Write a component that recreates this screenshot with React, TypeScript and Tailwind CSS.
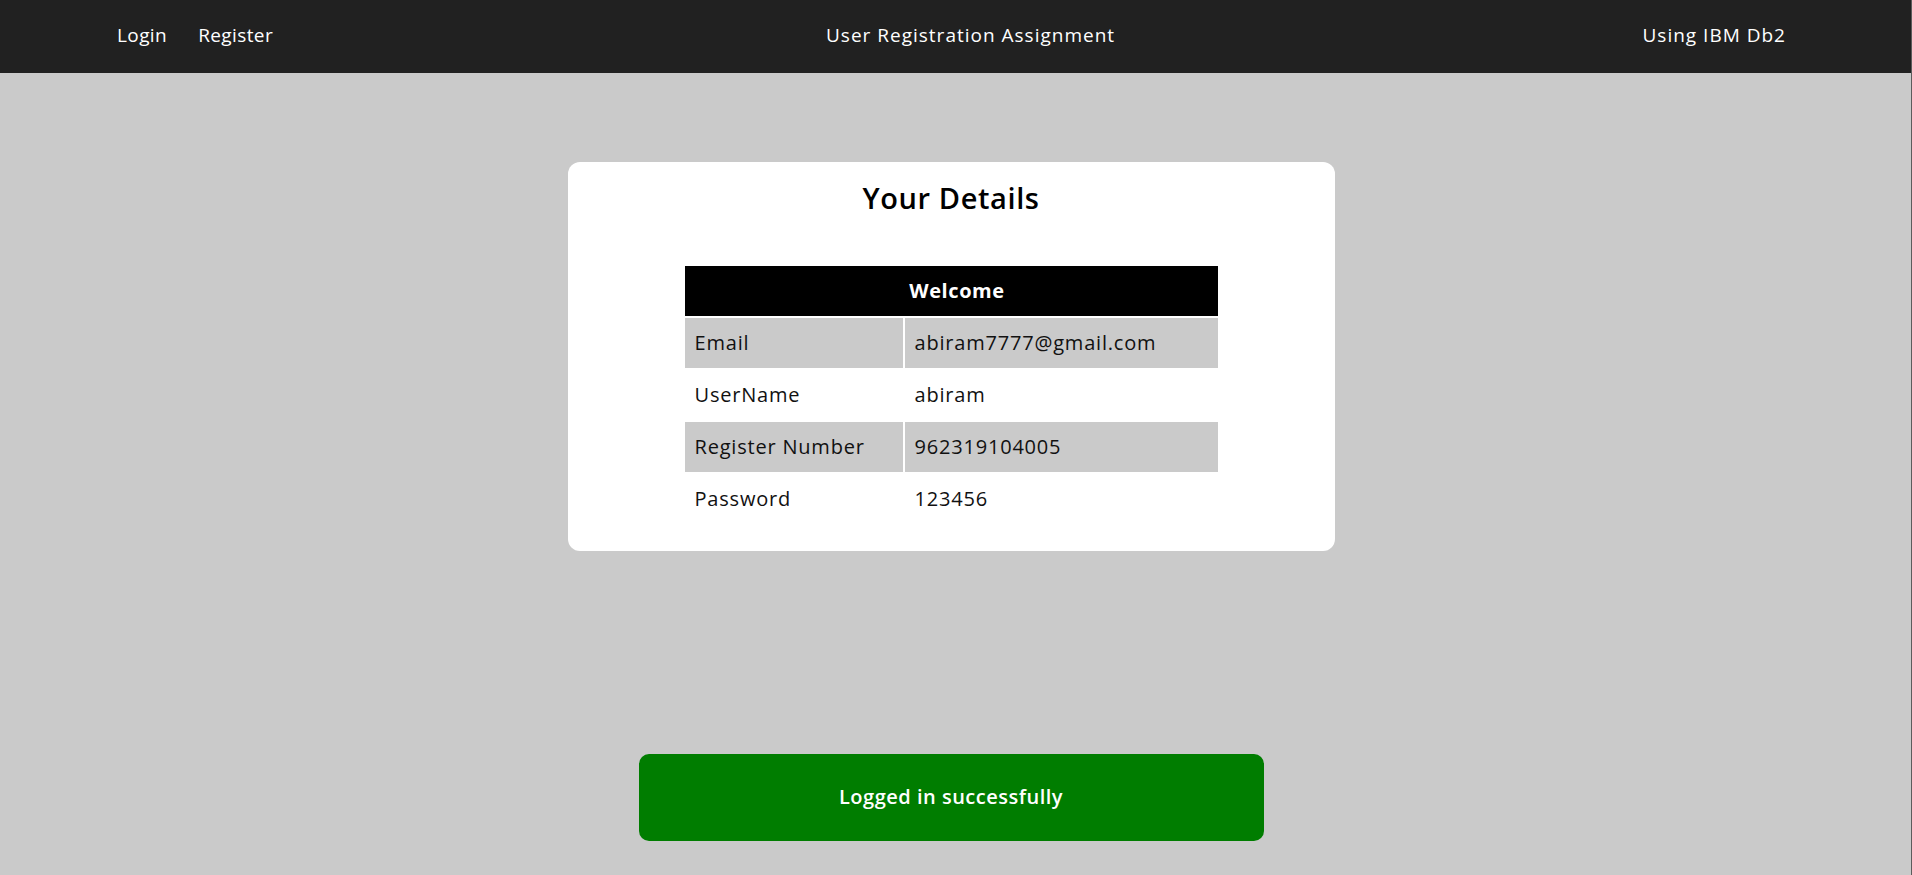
const rows: [string, string][] = [
  ['Email', 'abiram7777@gmail.com'],
  ['UserName', 'abiram'],
  ['Register Number', '962319104005'],
  ['Password', '123456'],
];

function Navbar() {
  return (
    <header className="grid h-[73px] grid-cols-[826px_1fr_auto] items-center bg-[#212121] pb-[2px] text-[19px] tracking-[1px] text-white">
      <nav className="flex gap-[31px] pl-[117px] tracking-[0.4px]">
        <a href="#">Login</a>
        <a href="#">Register</a>
      </nav>
      <div>User Registration Assignment</div>
      <div className="pr-[125px]">Using IBM Db2</div>
    </header>
  );
}

function DetailsCard() {
  return (
    <section className="mx-auto w-[767px] rounded-[12px] bg-white pb-[25px] pt-[14px]">
      <h2 className="text-center text-[29px] font-semibold tracking-[0.6px] text-black">Your Details</h2>
      <table className="mx-auto mt-[44px] w-[537px] border-separate border-spacing-[2px] text-[20px] tracking-[0.8px] text-[#111]">
        <thead>
          <tr>
            <th colSpan={2} className="h-[50px] bg-black pl-[12px] text-center font-bold tracking-[0.6px] text-white">
              Welcome
            </th>
          </tr>
        </thead>
        <tbody>
          {rows.map(([label, value], i) => (
            <tr key={label} className={i % 2 === 0 ? 'bg-[#cacaca]' : 'bg-white'}>
              <td className="h-[50px] w-[218px] px-[10px]">{label}</td>
              <td className="h-[50px] px-[10px]">{value}</td>
            </tr>
          ))}
        </tbody>
      </table>
    </section>
  );
}

export default function App() {
  return (
    <div
      className="min-h-[875px] border-r border-[#5c5c5c] bg-[#cacaca]"
      style={{ fontFamily: '"Open Sans", "Noto Sans", sans-serif' }}
    >
      <Navbar />
      <main className="flex flex-col items-center pr-[9px] pt-[89px]">
        <DetailsCard />
        <div className="mt-[203px] flex h-[87px] w-[625px] items-center justify-center rounded-[10px] bg-[#007d00] text-[20px] font-semibold tracking-[0.5px] text-white">
          Logged in successfully
        </div>
      </main>
    </div>
  );
}
